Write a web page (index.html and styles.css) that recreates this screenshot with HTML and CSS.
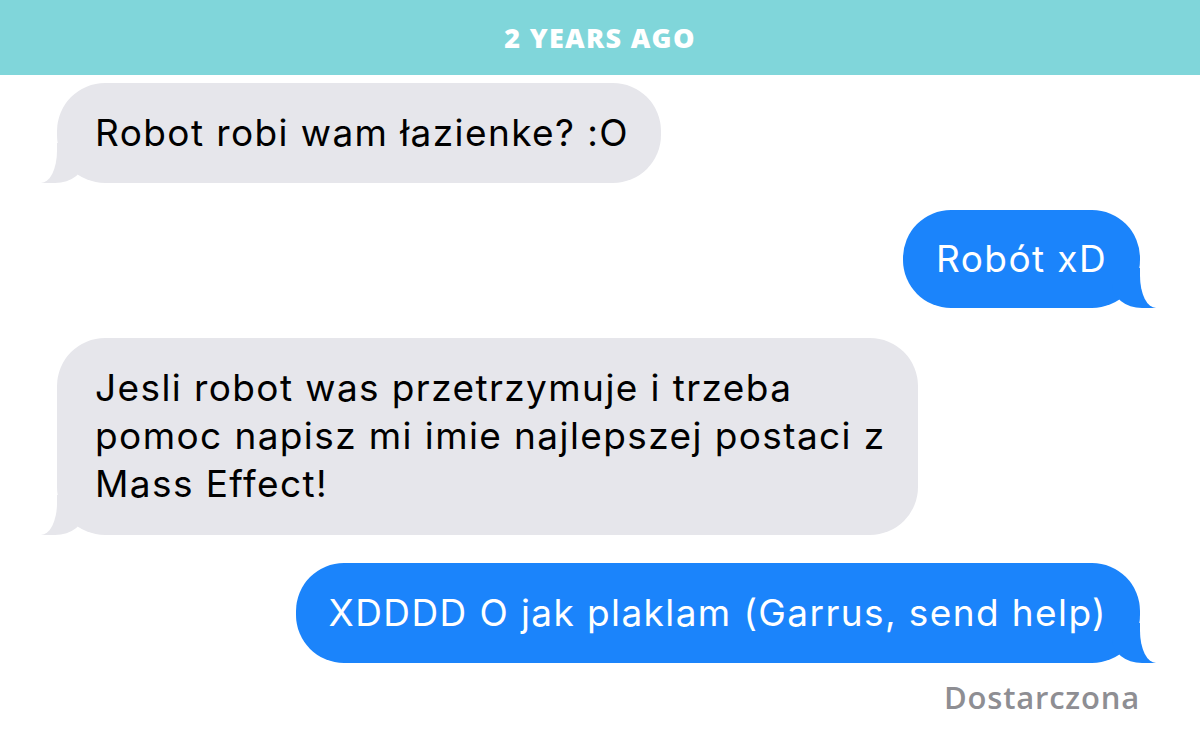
FILE: index.html
```html
<!DOCTYPE html>
<html>
<head>
<meta charset="utf-8">
<link rel="stylesheet" href="styles.css">
</head>
<body>
<header class="bar">2 YEARS AGO</header>
<main class="chat">
  <div class="msg in"><div class="bubble">Robot robi wam łazienke? :O</div></div>
  <div class="msg out"><div class="bubble short">Robót xD</div></div>
  <div class="msg in"><div class="bubble wide">Jesli robot was przetrzymuje i trzeba<br>pomoc napisz mi imie najlepszej postaci z<br>Mass Effect!</div></div>
  <div class="msg out"><div class="bubble">XDDDD O jak plaklam (Garrus, send help)</div></div>
  <div class="status">Dostarczona</div>
</main>
</body>
</html>
```
FILE: styles.css
```css
* { box-sizing: border-box; }
html, body { margin: 0; padding: 0; background: #fff; }
body { width: 1200px; height: 751px; overflow: hidden; font-family: Inter, Roboto, "Liberation Sans", sans-serif; }

.bar {
  height: 75px;
  background: #80d6da;
  color: #fff;
  font-family: "Open Sans", sans-serif;
  font-weight: 800;
  font-size: 27px;
  letter-spacing: 1.3px;
  display: flex;
  align-items: center;
  justify-content: center;
}

.chat {
  display: flex;
  flex-direction: column;
  padding: 8px 60px 0 57px;
  gap: 28px;
}

.msg { display: flex; }
.msg.in { justify-content: flex-start; }
.msg.out { justify-content: flex-end; }

.bubble {
  position: relative;
  font-size: 37px;
  line-height: 48px;
  letter-spacing: 1.4px;
  padding: 26px 32px 26px 38px;
  border-radius: 48px;
  z-index: 0;
  white-space: nowrap;
}
.bubble.wide { width: 861px; margin-top: 2px; padding-bottom: 27px; }

.in .bubble { background: #e6e6eb; color: #000; }
.out .bubble { background: #1b84fb; color: #fff; padding: 26px 33px; }
.out .bubble.short { padding: 25px 33px; margin-top: -1px; }

.bubble::before, .bubble::after {
  content: "";
  position: absolute;
  bottom: 0;
  height: 40px;
  z-index: -1;
}
.in .bubble::before {
  left: -16px;
  width: 44px;
  background: #e6e6eb;
  border-bottom-right-radius: 30px 24px;
}
.in .bubble::after {
  left: -50px;
  width: 50px;
  background: #fff;
  border-bottom-right-radius: 16px 32px;
}
.out .bubble::before {
  right: -16px;
  width: 44px;
  background: #1b84fb;
  border-bottom-left-radius: 30px 24px;
}
.out .bubble::after {
  right: -50px;
  width: 50px;
  background: #fff;
  border-bottom-left-radius: 16px 32px;
}

.status {
  align-self: flex-end;
  margin-top: -15px;
  color: #8e8e93;
  font-family: "Open Sans", sans-serif;
  font-size: 31px;
  font-weight: 600;
  letter-spacing: 0.8px;
}
```
